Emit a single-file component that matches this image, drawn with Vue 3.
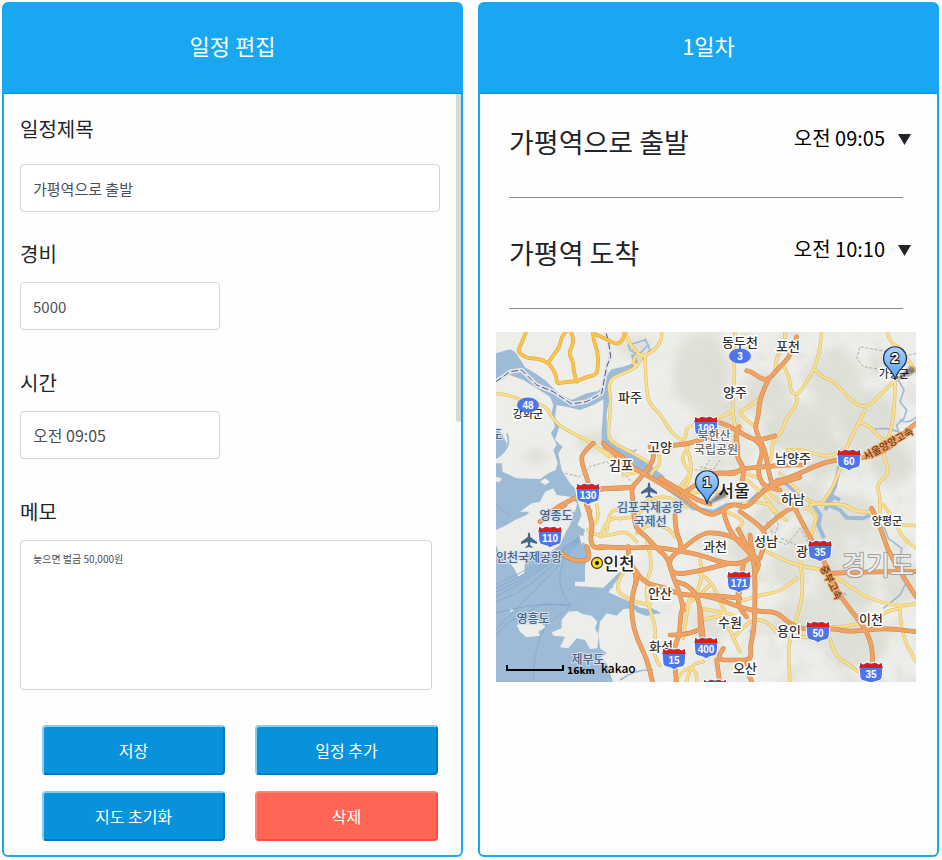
<script setup>
import { ref } from 'vue'

const title = ref('가평역으로 출발')
const cost = ref('5000')
const time = ref('오전 09:05')
const memo = ref('늦으면 벌금 50,000원')

const stops = [
  { name: '가평역으로 출발', time: '오전 09:05' },
  { name: '가평역 도착', time: '오전 10:10' },
]

// The map is drawn in tiles; each tile has its own origin.
const tiles = {
  nw: 'translate(-6 -2) scale(0.33333)',
  ne: 'translate(204 -2) scale(0.33333)',
  sw: 'translate(-6 173) scale(0.33333)',
  se: 'translate(204 173) scale(0.33333)',
  seoul: 'translate(104 108) scale(0.33333)',
}

// Turns a list of points into a line with rounded bends.
function smooth(points) {
  const p = points.split(' ').map((s) => s.split(',').map(Number))
  let d = `M${p[0]}`
  for (let i = 1; i < p.length - 1; i++) {
    const mid = [(p[i][0] + p[i + 1][0]) / 2, (p[i][1] + p[i + 1][1]) / 2]
    d += `Q${p[i]} ${mid}`
  }
  return d + `L${p[p.length - 1]}`
}

const source = {
  local: {
    nw: [
      '18,190 60,195 100,215 165,225 185,260 205,285 240,305 300,335 345,370 365,385 400,400 460,430',
      '405,6 415,35 435,60 455,80 490,65 515,30 515,0',
      '455,80 445,110 400,130 365,145 355,170 362,200 360,260 352,325 380,345 430,370 480,400',
      '465,80 468,180 480,225 510,250 545,310 580,335 590,310 590,290 630,280',
      '505,370 515,400 490,420 480,440', '580,335 600,370 605,440 580,480',
      '440,75 425,95 440,110', '400,435 440,425 470,430', '340,360 360,385 410,400',
    ],
    ne: [
      '105,6 100,80 105,130 95,240 110,300 100,340 120,400', '255,0 255,40 230,80 225,120', '50,265 80,255 100,240',
      '178,205 150,230 115,245 140,270 165,290', '250,105 270,145 270,180 290,200 330,140 345,110 360,60 365,0',
      '290,200 295,220 255,270 250,300 215,340 215,390 190,410', '345,120 370,145 400,150 440,200 495,240 545,190 585,150',
      '495,240 470,290 440,350 410,450 370,520 330,525', '560,0 570,40 600,50 620,85 648,125',
      '585,150 585,230 570,320 550,335 510,290 480,278', '550,335 550,380 570,430 530,460 540,500 540,545',
      '260,360 300,355 340,372 390,380 430,360', '240,430 290,480 340,525 430,520 470,545',
      '130,430 180,440 190,470',
    ],
    sw: [
      '320,0 330,40 300,70 290,80 340,95 380,85 410,80 440,110', '350,80 355,15 400,15', '470,110 490,180 470,220 470,290 500,370 490,430 500,470 510,480',
      '405,195 365,250 430,290 480,300', '600,270 590,330 580,400',
      '555,530 590,480 620,500 620,530', '590,530 600,480 640,470', '660,240 620,280 580,300',
    ],
    se: [
      '180,130 240,160 300,185 360,190 430,230 500,280 600,305 648,295', '300,160 310,240 300,310 270,400 265,440 270,540',
      '120,290 180,270 240,260 290,220', '70,330 100,400 120,440', '100,400 140,350 190,340 240,390', '300,0 350,20 345,60 330,100',
      '390,400 400,450 450,480 500,520', '600,305 600,380 648,470', '550,0 590,50 600,90 648,130', '430,0 470,20 515,22',
      '500,350 440,365 400,365', '0,210 30,220 60,290 80,330 0,345', '500,375 550,320 600,310', '595,60 648,62', '0,310 60,320 100,330',
      '240,385 300,395 350,400',
    ],
    seoul: [
      '0,290 20,232 80,238 130,215 125,185 200,165 260,200', '110,280 140,250 200,260 225,290', '270,50 278,95 240,140',
      '430,190 500,180 540,230 560,240', '300,360 310,400 290,460', '265,90 240,60 265,20', '440,120 500,170 520,215',
      '380,215 440,240 410,270', '250,165 310,150 370,160', '500,150 530,185 560,190',
    ],
  },
  scenic: {
    nw: [
      '110,0 95,40 82,65 110,85 145,85 175,98 190,120 200,140 200,162 230,155 260,155 290,140 320,135 325,100 322,60 310,30 310,0',
      '235,0 215,15 210,50 190,75 175,98', '240,0 255,30 235,70 250,95 250,120 260,155', '310,10 345,25 380,45 400,30 405,0',
    ],
  },
  express: {
    nw: [
      '310,340 275,370 275,400 290,440 300,480 285,520 300,545',
      '185,545 210,525 265,500 290,490 330,475 430,472', '660,320 600,340 560,345 520,350', '345,350 400,380 420,408',
    ],
    ne: [
      '290,20 275,75 235,115 205,150 180,145 155,125 140,122', '205,150 180,200 175,260 165,290 175,320 195,360 205,420 215,460',
      '30,270 70,280 100,295 150,325 180,330 225,318', '118,290 105,320 115,350 110,380 130,410 130,440 120,480',
      '30,430 100,430 130,415 200,410 250,405 305,405', '215,460 280,440 340,410 400,390 480,385 530,375 580,345 610,310 648,280',
      '165,330 195,350 170,420 190,470 240,480',
    ],
    sw: [
      '290,0 310,60 300,100 310,130 345,127', '290,125 305,160 270,170 235,160 215,145',
      '440,225 425,270 425,340 440,400 470,460 490,540', '580,300 570,330 570,390 550,430 560,540',
      '560,230 600,240 630,290 630,370 640,420', '540,390 590,390 635,370', '225,0 190,20 150,50',
    ],
    se: [
      '165,230 165,370 150,420 155,465 110,465 50,465 70,430',
      '0,270 50,280 100,300 165,320 230,320 260,350 310,375 400,370 440,380 500,375 560,370 648,380',
      '280,0 330,100 375,170 400,240 440,300 500,375 520,440 515,540', '515,10 540,60 560,130 600,200 648,275', '390,205 500,200 648,200', '115,250 110,300 140,335',
      '50,465 60,540', '0,310 10,400', '130,470 155,530',
    ],
    seoul: [
      '10,10 40,40 85,75 130,100 180,130 250,170 290,205 335,228 370,210 400,190 440,207 490,150 540,130 600,112',
      '180,115 250,155 290,180 330,192', '95,143 140,95 165,50 150,20', '95,143 100,200 105,265 140,290 165,320 205,355 215,400 240,460 250,510',
      '0,320 80,325 165,320 250,335 300,345 380,372 430,370 460,345', '250,325 300,280 350,278 400,290 430,310',
      '225,225 225,270 250,325 205,355 215,405 290,395 380,372', '370,210 375,240 400,290 440,330 462,355 465,440',
      '450,285 455,340 480,370 465,400', '415,268 430,300 460,345', '420,215 480,255 500,290 480,355', '430,370 418,460',
      '495,265 550,215 590,200', '250,160 300,125 350,95 400,105 430,85', '85,320 85,345', '0,147 60,145 95,143',
      '105,390 130,430 190,440 240,465 330,465 420,475', '85,350 110,400 105,440',
    ],
  },
}

const roads = Object.entries(source).map(([kind, byTile]) => ({
  kind,
  lines: Object.entries(byTile).flatMap(([tile, list]) => list.map((pts) => ({ at: tiles[tile], d: smooth(pts) }))),
}))

const hills = [
  [205, 40, 28, 40], [225, 90, 22, 30], [270, 60, 26, 20], [300, 95, 34, 26], [340, 50, 26, 34], [370, 90, 30, 30],
  [330, 125, 26, 20], [395, 130, 20, 26], [300, 165, 26, 18], [350, 185, 34, 22], [320, 215, 30, 26], [290, 235, 18, 18],
  [350, 255, 30, 22], [310, 285, 34, 22], [360, 310, 30, 26], [405, 250, 20, 22], [250, 215, 14, 18], [210, 290, 14, 14],
  [40, 125, 12, 8], [30, 75, 12, 6], [140, 15, 18, 10], [100, 110, 20, 10],
]

const towns = [
  ['동두천', 244, 15], ['포천', 292, 19], ['파주', 134, 70], ['양주', 239, 65], ['고양', 164, 120], ['김포', 125, 138],
  ['남양주', 297, 131], ['하남', 297, 172], ['성남', 270, 214], ['과천', 219, 219], ['광', 306, 224], ['안산', 164, 266],
  ['수원', 234, 295], ['용인', 293, 304], ['이천', 375, 292], ['화성', 165, 319], ['오산', 249, 341],
].map(([name, x, y]) => ({ name, x, y, kind: 'town' })).concat([
  { name: '양평군', x: 391, y: 193, kind: 'county' },
  { name: '가평군', x: 398, y: 46, kind: 'county' },
  { name: '강화군', x: 32, y: 86, kind: 'county' },
  { name: '도', x: 1, y: 107, kind: 'sea' },
  { name: '영종도', x: 60, y: 188, kind: 'sea' },
  { name: '영흥도', x: 37, y: 291, kind: 'sea' },
  { name: '제부도', x: 92, y: 332, kind: 'sea' },
  { name: '김포국제공항', x: 154, y: 180, kind: 'sea' },
  { name: '국제선', x: 154, y: 194, kind: 'sea' },
  { name: '인천국제공항', x: 33, y: 230, kind: 'sea' },
  { name: '서울', x: 238, y: 165, kind: 'city' },
  { name: '인천', x: 123, y: 238, kind: 'city' },
])

const shields = [
  [130, 92, 162], [110, 54, 205], [100, 210, 95], [60, 353, 128], [171, 243, 250], [35, 324, 219],
  [50, 322, 300], [35, 375, 341], [15, 178, 327], [400, 210, 316], ['', 219, 358],
]
const ovals = [[48, 32, 73], [3, 244, 24]]
const airports = [[153, 158], [33, 208]]
const pins = [[1, 211, 172], [2, 399, 48]]
</script>

<template>
  <main class="planner">
    <section class="panel">
      <header class="panel-head"><h1>일정 편집</h1></header>
      <form class="edit" @submit.prevent>
        <div class="field first">
          <label for="title">일정제목</label>
          <input id="title" v-model="title" type="text" />
        </div>
        <div class="field short">
          <label for="cost">경비</label>
          <input id="cost" v-model="cost" type="text" />
        </div>
        <div class="field short">
          <label for="time">시간</label>
          <input id="time" v-model="time" type="text" class="clock" />
        </div>
        <div class="field memo">
          <label for="memo">메모</label>
          <textarea id="memo" v-model="memo"></textarea>
        </div>
        <div class="actions">
          <button type="submit">저장</button>
          <button type="button">일정 추가</button>
          <button type="button">지도 초기화</button>
          <button type="button" class="danger">삭제</button>
        </div>
        <span class="scroll-thumb" aria-hidden="true"></span>
      </form>
    </section>

    <section class="panel">
      <header class="panel-head"><h1>1일차</h1></header>
      <ul class="stops">
        <li v-for="s in stops" :key="s.name">
          <div class="stop">
            <h2>{{ s.name }}</h2>
            <time>{{ s.time }}</time>
            <button type="button" class="toggle" :aria-label="s.name">
              <svg viewBox="0 0 13 11" width="13" height="11"><path d="M0 0H13L6.500 11Z" fill="#212529" /></svg>
            </button>
          </div>
        </li>
      </ul>
      <div class="map-wrap">
        <svg class="map" viewBox="0 0 420 350" role="img" aria-label="지도">
          <defs>
            <filter id="soft" x="-30%" y="-30%" width="160%" height="160%"><feGaussianBlur stdDeviation="5" /></filter>
            <filter id="shade" x="-30%" y="-30%" width="160%" height="160%"><feGaussianBlur stdDeviation="1" /></filter>
            <filter id="relief" x="0" y="0" width="100%" height="100%">
              <feTurbulence type="fractalNoise" baseFrequency="0.035" numOctaves="4" seed="8" />
              <feColorMatrix values="0 0 0 0 0.7  0 0 0 0 0.71  0 0 0 0 0.65  2.400 0 0 0 -1.050" />
            </filter>
            <linearGradient id="pin" x1="0" y1="0" x2="0" y2="1">
              <stop offset="0" stop-color="#a9d2ff" /><stop offset="1" stop-color="#4f9df5" />
            </linearGradient>
            <linearGradient id="east" x1="0" x2="1">
              <stop offset="0.3" stop-color="#000" /><stop offset="0.6" stop-color="#fff" />
            </linearGradient>
            <mask id="highlands"><rect width="420" height="350" fill="url(#east)" /></mask>
          </defs>
          <rect width="420" height="350" fill="#edeee9" />
          <g fill="#d8d9cf" opacity="0.65" filter="url(#soft)">
            <ellipse v-for="(h, i) in hills" :key="i" :cx="h[0]" :cy="h[1]" :rx="h[2]" :ry="h[3]" />
          </g>
          <g mask="url(#highlands)"><rect width="420" height="350" filter="url(#relief)" opacity="0.8" /></g>

          <g class="water">
            <g :transform="tiles.nw">
              <path d="M18 70L60 58L75 65L95 95L105 112L135 130L165 150L190 175L215 195L245 210L290 190L325 183L340 165L346 140L365 118L400 110L430 100L422 75L440 70L445 105L400 125L365 142L355 170L360 200L350 250L350 290L352 325L380 350L430 375L480 405L525 440L510 452L470 430L420 400L370 375L335 345L335 300L340 240L340 208L310 225L270 240L230 230L200 225L195 260L208 290L195 330L218 350L205 370L215 420L240 460L255 475L272 560H18V400L35 400L38 425L80 445L150 447L175 430L197 420L203 400L190 360L200 345L183 310L195 290L185 250L190 225L180 200L140 175L100 150L60 135L18 148Z" />
              <path d="M18 295L35 310L50 340L45 365L18 385Z" />
            </g>
            <g :transform="tiles.sw">
              <path d="M18 -5H265L275 30L262 60L285 75L275 110L300 125L290 160L285 185V230H255V243L340 248L385 205L410 190L385 220L355 262L420 290L450 308L500 316L505 325L470 333L440 322L430 310L400 312L380 332L350 325L330 350L325 385L330 430L350 445L330 460L350 475L360 505L372 540H18Z" />
            </g>
          </g>
          <g class="land">
            <g :transform="tiles.nw">
              <path d="M90 545L125 520L150 515L165 485L190 475L200 495L240 500L262 520L255 545Z" />
              <path d="M150 455L165 445L180 455L165 465Z" />
              <path d="M18 440L35 445L30 455L18 455Z" />
            </g>
            <g :transform="tiles.sw">
              <path d="M18 75L50 60L75 45L110 30L130 5L240 5L250 30L240 60L228 80L210 120L180 140L120 140L105 160L103 205L85 215L72 190L60 175L30 150L18 120Z" />
              <path d="M215 345L235 320L260 318L280 328L305 332L322 350L315 370L326 390L322 430L300 432L285 405L260 400L235 430L210 427L225 395L190 392L185 382L215 370Z" />
              <path d="M80 360L110 350L140 345L168 365L145 380L150 392L110 397L90 380Z" />
              <path d="M268 90L285 95L275 120ZM325 460L345 455L340 475ZM60 310L72 315L62 322Z" />
            </g>
          </g>
          <g class="river">
            <g :transform="tiles.nw">
              <path d="M440 72L420 60L415 45L465 30L475 45L450 70M455 90L480 60L465 25M400 355L430 365L440 358M18 385Q70 350 50 310" />
            </g>
            <g :transform="tiles.ne">
              <path d="M595 150L612 180L600 215L620 240L612 265L590 285L595 305L560 295L525 297M648 262Q620 285 600 268" />
              <path class="wide" d="M420 400L405 470L375 530M375 540L400 500L420 510" />
            </g>
            <path class="wide" :transform="tiles.seoul" d="M60 40L100 68L160 115L240 172L280 205L340 215L380 195L440 192L500 140L535 118L565 135L600 170" />
            <g :transform="tiles.se">
              <path class="wide" d="M340 0L362 30L355 60L372 100M375 -5L420 15L440 38L490 40L510 30" />
              <path d="M550 60L565 100L605 130L600 170L620 230M150 375L158 400M400 250L440 270M550 310L600 270L620 230" />
            </g>
            <g :transform="tiles.sw"><path d="M230 310Q290 260 370 245M480 310L510 325M390 525Q440 490 490 495" /></g>
          </g>
          <g class="ferry" :transform="tiles.sw">
            <path d="M268 95Q150 180 18 238M268 98Q150 190 18 250M268 101Q150 200 18 262M268 104Q150 208 18 275M268 107Q170 205 80 265L18 290M268 110Q180 215 18 372M18 325Q160 285 240 302M242 302Q190 240 220 170M18 390L60 350L150 300H240M130 530Q130 420 170 360L240 305M18 0Q40 20 60 30" />
          </g>
          <g :transform="tiles.nw">
            <path class="border-band" d="M18 155L60 125L95 120L140 165L190 185L245 222L290 215L335 190L350 110L362 80L355 30L345 0" />
            <path class="border-line" d="M18 155L60 125L95 120L140 165L190 185L245 222L290 215L335 190L350 110L362 80L355 30L345 0" />
          </g>
          <g class="district">
            <path :transform="tiles.nw" d="M225 430L270 440L300 410L350 395L400 430L425 455M600 420L640 420L660 390" />
            <path :transform="tiles.ne" d="M648 70L610 80L590 60M560 65L480 50L470 85L490 110L550 120M640 125L615 150M0 410L40 420L60 390" />
            <path :transform="tiles.se" d="M215 0L235 60L220 100L260 120L300 70L330 120M200 50L220 90L290 120" />
          </g>

          <g v-for="r in roads" :key="r.kind" class="road" :class="r.kind">
            <path v-for="(l, i) in r.lines" :key="'c' + i" class="casing" :transform="l.at" :d="l.d" />
            <path v-for="(l, i) in r.lines" :key="'f' + i" class="fill" :transform="l.at" :d="l.d" />
          </g>

          <g class="labels">
            <text v-for="t in towns" :key="t.name" :x="t.x" :y="t.y" :class="t.kind">{{ t.name }}</text>
            <text class="province" x="382" y="243">경기도</text>
            <text class="route" transform="translate(394 115) rotate(-29)">서울양양고속</text>
            <text class="route" transform="translate(332 252) rotate(64)">중부고속</text>
          </g>

          <g v-for="(s, i) in shields" :key="'s' + i" :transform="`translate(${s[1]} ${s[2]})`">
            <path d="M-12 -6L-11 -11L-8 -9L-4 -11L0 -10L4 -11L8 -9L11 -11L12 -6L11 5Q10 8 5 8.500Q2 9 0 11Q-2 9 -5 8.500Q-10 8 -11 5Z" fill="#4d75ec" stroke="#fff" stroke-width="1" />
            <path d="M-11.500 -5L-10.500 -10L-8 -8L-4 -10L0 -8.500L4 -10L8 -8L10.500 -10L11.500 -5Z" fill="#dc1e10" />
            <text class="number" y="5">{{ s[0] }}</text>
          </g>
          <g v-for="o in ovals" :key="'o' + o[0]" :transform="`translate(${o[1]} ${o[2]})`">
            <ellipse rx="11" ry="7.500" fill="#4d75ec" />
            <text class="number" y="4">{{ o[0] }}</text>
          </g>
          <path v-for="(a, i) in airports" :key="'a' + i" :transform="`translate(${a[0]} ${a[1]})`" d="M0 -8Q1.300 -7 1.300 -3L8 2V4L1.300 2L1 5L3.500 7V8L0 7L-3.500 8V7L-1 5L-1.300 2L-8 4V2L-1.300 -3Q-1.300 -7 0 -8Z" fill="#46658f" />
          <g transform="translate(101 231)">
            <circle r="5.500" fill="#ffdc1e" stroke="#4a4320" stroke-width="1.300" /><circle r="2" fill="#111" />
          </g>
          <g class="labels">
            <text class="park" x="218" y="108">북한산</text>
            <text class="park" x="220" y="122">국립공원</text>
          </g>

          <g v-for="p in pins" :key="'p' + p[0]" :transform="`translate(${p[1]} ${p[2]})`">
            <path d="M0 0L14 -13Q21 -14 20 -8Q12 -3 0 0Z" fill="#000" opacity="0.45" filter="url(#shade)" />
            <path d="M0 0C-1 -7 -5 -10 -8.500 -14A11.500 11.500 0 1 1 8.500 -14C5 -10 1 -7 0 0Z" fill="url(#pin)" stroke="#1d3350" stroke-width="1.200" />
            <text class="pin-number" y="-17">{{ p[0] }}</text>
          </g>

          <path d="M11 333V338H67V333" fill="none" stroke="#000" stroke-width="2" />
          <text class="scale" x="71" y="342">16km</text>
          <text class="brand" x="105" y="341">kakao</text>
        </svg>
      </div>
    </section>
  </main>
</template>

<style>
body {
  margin: 0;
  background: #fff;
}
</style>

<style scoped>
* {
  box-sizing: border-box;
}
.planner {
  display: grid;
  grid-template-columns: 1fr 1fr;
  gap: 15px;
  padding: 2px 3px 3px 2px;
  color: #212529;
  font-family: "Noto Sans CJK KR", sans-serif;
}
.panel {
  min-width: 0;
  border: 2px solid #1aa7f2;
  border-radius: 6px;
  background: #fefefe;
}
.panel-head {
  display: flex;
  align-items: center;
  justify-content: center;
  height: 90px;
  padding-bottom: 8px;
  background: #1aa7f2;
  border-bottom: 1px solid #0892db;
  color: #fff;
}
h1,
h2 {
  margin: 0;
  font-weight: 400;
}
h1 {
  font-size: 22px;
}
.edit {
  position: relative;
  padding: 0 21px 14px 16px;
}
.field {
  display: flex;
  flex-direction: column;
}
.field label {
  height: 56px;
  line-height: 56px;
  font-size: 20px;
}
.field.first {
  margin-bottom: 14px;
}
.field.first label {
  height: 70px;
  line-height: 70px;
}
.field.short {
  margin-bottom: 25px;
}
.field.short input {
  width: 200px;
}
.field input,
.field textarea {
  border: 1px solid #ced4da;
  border-radius: 4px;
  background: #fff;
  color: #495057;
  font-family: inherit;
}
.field input {
  height: 48px;
  padding: 0 12px;
  font-size: 15px;
}
.field input.clock {
  font-size: 16px;
}
.field textarea {
  height: 150px;
  margin-right: 8px;
  padding: 10px 12px;
  font-size: 10px;
  line-height: 16px;
  resize: none;
}
.actions {
  display: grid;
  grid-template-columns: 1fr 1fr;
  gap: 16px 30px;
  margin-top: 35px;
  padding: 0 2px 0 22px;
}
.actions button {
  height: 50px;
  padding: 0;
  border: 2px solid;
  border-color: #87ceeb #0078c8 #0078c8 #87ceeb;
  border-radius: 4px;
  background: #0892db;
  color: #fff;
  font-family: inherit;
  font-size: 16px;
}
.actions .danger {
  border-color: #ff8478 #ff4a3c #ff4a3c #ff8478;
  background: #ff6656;
}
.scroll-thumb {
  position: absolute;
  top: 0;
  right: 0;
  width: 5px;
  height: 328px;
  border-radius: 0 0 3px 3px;
  background: #d5dbd6;
}
.stops {
  margin: 0;
  padding: 20px 34px 23px 29px;
  list-style: none;
}
.stops li {
  padding-bottom: 29px;
  border-bottom: 1px solid #888;
}
.stops li + li {
  margin-top: 27px;
}
.stop {
  display: flex;
  align-items: center;
  height: 54px;
  margin-right: -8px;
}
.stop h2 {
  flex: 1;
  font-size: 27px;
  white-space: nowrap;
}
.stop time {
  color: #000;
  font-size: 20px;
  line-height: 24px;
  padding-bottom: 6px;
  white-space: nowrap;
}
.toggle {
  display: flex;
  margin-left: 13px;
  padding: 0 0 4px;
  border: 0;
  background: none;
}
.map-wrap {
  padding: 0 21px 0 16px;
}
.map {
  display: block;
  width: 100%;
  height: auto;
}
.water path {
  fill: #9dbad6;
}
.land path {
  fill: #edeee9;
}
.river path {
  fill: none;
  stroke: #9dbad6;
  stroke-width: 5;
  stroke-linejoin: round;
}
.river .wide {
  stroke-width: 12;
}
.ferry path {
  fill: none;
  stroke: #7ba3d0;
  stroke-width: 2;
}
.border-band {
  fill: none;
  stroke: #dfe5f2;
  stroke-width: 13;
  stroke-linejoin: round;
}
.border-line {
  fill: none;
  stroke: #555;
  stroke-width: 3;
  stroke-dasharray: 20 8;
}
.district path {
  fill: none;
  stroke: #aeada4;
  stroke-width: 3;
  stroke-dasharray: 9 5;
}
.road path {
  fill: none;
  stroke-linecap: round;
  stroke-linejoin: round;
}
.local .casing {
  stroke: #d6b870;
  stroke-width: 10;
}
.local .fill {
  stroke: #fbe08c;
  stroke-width: 7;
}
.scenic .casing {
  stroke: #d9a136;
  stroke-width: 11;
}
.scenic .fill {
  stroke: #fbc54d;
  stroke-width: 8;
}
.express .casing {
  stroke: #c98548;
  stroke-width: 14;
}
.express .fill {
  stroke: #efa263;
  stroke-width: 11;
}
.map text {
  text-anchor: middle;
}
.labels text {
  paint-order: stroke;
  stroke: #fff;
  stroke-width: 3px;
  stroke-linejoin: round;
  fill: #333;
  font-size: 13px;
  font-weight: 500;
}
.labels .county {
  font-size: 11px;
}
.labels .sea {
  fill: #48628a;
  stroke: #d5e1ec;
  stroke-width: 2px;
  font-size: 12px;
}
.labels .city {
  font-size: 17px;
  fill: #222;
}
.labels .park {
  fill: #666;
  stroke-width: 2px;
  font-size: 12px;
}
.labels .province {
  fill: #eeeeea;
  stroke: #a39c9c;
  stroke-width: 2px;
  font-size: 26px;
  font-weight: 400;
}
.labels .route {
  fill: #6b3b16;
  stroke: #efa263;
  stroke-width: 2px;
  font-size: 10px;
}
.map .number {
  fill: #fff;
  font-family: "Liberation Sans", sans-serif;
  font-size: 10px;
  font-weight: 700;
}
.map .pin-number {
  paint-order: stroke;
  fill: #fff;
  stroke: #111;
  stroke-width: 2px;
  font-family: "Liberation Sans", sans-serif;
  font-size: 15px;
  font-weight: 700;
}
.map .scale {
  text-anchor: start;
  font-family: "DejaVu Sans", sans-serif;
  font-size: 9px;
  font-weight: 700;
}
.map .brand {
  text-anchor: start;
  font-size: 12px;
  font-weight: 500;
}
</style>
